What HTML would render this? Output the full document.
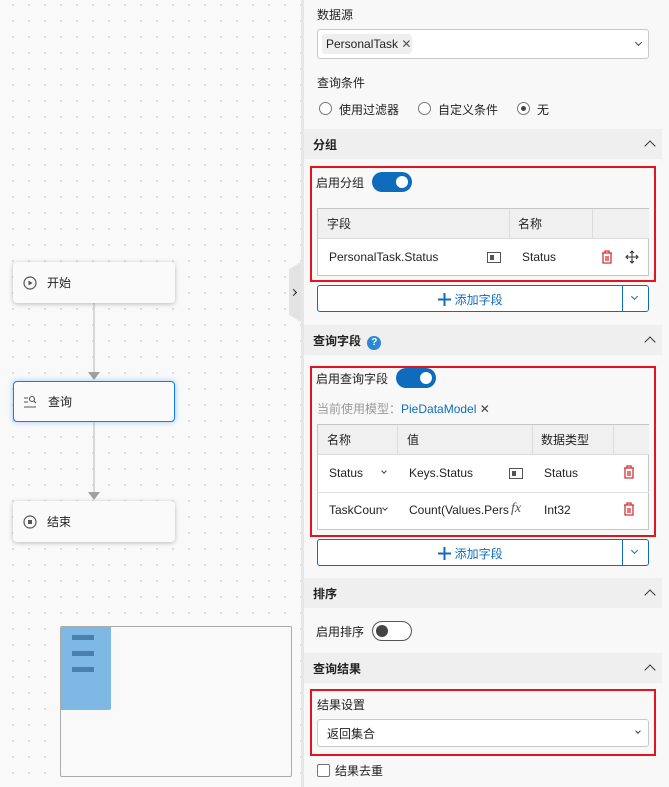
<!DOCTYPE html>
<html><head><meta charset="utf-8"><style>
*{box-sizing:border-box;margin:0;padding:0}
body{width:669px;height:787px;overflow:hidden;position:relative;background:#f9f9f9;font-family:"Liberation Sans","Noto Sans CJK SC",sans-serif;font-size:12px;color:#222}
.a{position:absolute}
#canvas{left:0;top:0;width:301px;height:787px;background-color:#f9f9f9;background-image:radial-gradient(circle,#d4d4d4 0.9px,transparent 1.1px);background-size:16px 16px;background-position:5px -3px}
.node{position:absolute;left:13px;width:162px;height:41px;background:#fafafa;border-radius:4px;box-shadow:0 1px 5px rgba(0,0,0,.25);display:flex;align-items:center;padding-left:10px;font-size:12px;color:#222}
.node .t{margin-left:10px}
#panel{left:301px;top:0;width:368px;height:787px;background:#f8f8f8;border-left:3px solid #e6e6e6}
.hdr{position:absolute;left:304px;width:358px;height:30px;background:#efefef;font-weight:bold;font-size:12px;padding:7px 0 0 9px}
.hdr .c{position:absolute;right:8px;top:13px;width:8px;height:8px;border-left:1.5px solid #333;border-top:1.5px solid #333;transform:rotate(45deg)}
.red{position:absolute;left:310px;width:346px;border:2px solid #e3141e}
.box{position:absolute;left:317px;width:332px;background:#fff;border:1px solid #c9c9c9;border-radius:3px}
.chev{position:absolute;width:5px;height:5px;border-right:1.3px solid #444;border-bottom:1.3px solid #444;transform:rotate(45deg)}
.tog{position:absolute;width:40px;height:20px;border-radius:10px;background:#0f6cbd}
.tog:after{content:"";position:absolute;right:4px;top:4px;width:12px;height:12px;border-radius:50%;background:#fff}
.tog.off{background:#fff;border:1px solid #555}
.tog.off:after{left:3px;top:3px;right:auto;background:#444}
.tbl{position:absolute;left:317px;width:332px;border:1px solid #c6c6c6;background:#fff}
.th{position:absolute;top:0;height:30px;background:#f0f0f0;border-bottom:1px solid #dcdcdc}
.btn{position:absolute;left:317px;width:332px;height:27px;border:1px solid #0f6cbd;border-radius:3px;background:#fff;color:#0f6cbd;font-size:12px}
.radio{position:absolute;width:13px;height:13px;border:1px solid #777;border-radius:50%;background:#fff}
.trash{position:absolute;width:12px;height:14px}
</style></head><body>
<div id="canvas" class="a"></div>
<div class="a" style="left:93px;top:302px;width:2px;height:72px;background:#d8d8d8"></div>
<div class="a" style="left:88px;top:372px;border-left:6px solid transparent;border-right:6px solid transparent;border-top:8px solid #a0a0a0"></div>
<div class="a" style="left:93px;top:422px;width:2px;height:72px;background:#d8d8d8"></div>
<div class="a" style="left:88px;top:492px;border-left:6px solid transparent;border-right:6px solid transparent;border-top:8px solid #a0a0a0"></div>
<div class="node" style="top:262px"><svg width="14" height="14" viewBox="0 0 14 14"><circle cx="7" cy="7" r="6" fill="none" stroke="#555" stroke-width="1.2"/><path d="M5.5 4.5L9.5 7L5.5 9.5Z" fill="#555"/></svg><span class="t">开始</span></div>
<div class="node" style="top:381px;border:1px solid #0f7bff;box-shadow:0 0 6px rgba(40,140,255,.45);padding-left:9px"><svg width="15" height="14" viewBox="0 0 15 14"><path d="M1 3H5M1 7H5M1 12H13" stroke="#555" stroke-width="1.1"/><circle cx="9" cy="4" r="2.5" fill="none" stroke="#555" stroke-width="1.1"/><path d="M11 6L13 8" stroke="#555" stroke-width="1.2"/></svg><span class="t">查询</span></div>
<div class="node" style="top:501px"><svg width="14" height="14" viewBox="0 0 14 14"><circle cx="7" cy="7" r="6" fill="none" stroke="#555" stroke-width="1.2"/><rect x="5" y="5" width="4" height="4" fill="#555"/></svg><span class="t">结束</span></div>
<div class="a" style="left:289px;top:262px;width:12px;height:60px;background:#e3e3e3;clip-path:polygon(0 12%,100% 0,100% 100%,0 88%)"></div>
<div class="chev" style="left:291px;top:290px;transform:rotate(-45deg);border-color:#222;border-width:1.8px"></div>
<div class="a" style="left:60px;top:626px;width:232px;height:151px;border:1px solid #aaa;border-radius:2px;background:#f9f9f9"></div>
<div class="a" style="left:61px;top:627px;width:50px;height:83px;background:#7eb8e4;border-radius:0 0 2px 0"></div>
<div class="a" style="left:72px;top:635px;width:22px;height:5px;background:#4a80ad"></div>
<div class="a" style="left:72px;top:651px;width:22px;height:5px;background:#4a80ad"></div>
<div class="a" style="left:72px;top:667px;width:22px;height:5px;background:#4a80ad"></div>

<div id="panel" class="a"></div>
<div class="a" style="left:317px;top:6px">数据源</div>
<div class="box" style="top:29px;height:30px"></div>
<div class="a" style="left:322px;top:34px;height:20px;width:90px;background:#efefef;border-radius:3px;padding:3px 0 0 4px">PersonalTask <span style="color:#555">✕</span></div>
<div class="chev" style="left:636px;top:40px"></div>
<div class="a" style="left:317px;top:74px">查询条件</div>
<div class="radio" style="left:319px;top:102px"></div><div class="a" style="left:339px;top:101px">使用过滤器</div>
<div class="radio" style="left:418px;top:102px"></div><div class="a" style="left:438px;top:101px">自定义条件</div>
<div class="radio" style="left:517px;top:102px"></div><div class="a" style="left:521px;top:106px;width:5px;height:5px;border-radius:50%;background:#444"></div><div class="a" style="left:537px;top:101px">无</div>

<div class="hdr" style="top:129px">分组<span class="c"></span></div>
<div class="red" style="top:166px;height:116px"></div>
<div class="a" style="left:316px;top:174px">启用分组</div>
<div class="tog" style="left:372px;top:172px"></div>
<div class="tbl" style="top:208px;height:68px">
 <div class="th" style="left:0;width:192px;border-right:1px solid #dcdcdc;padding:6px 0 0 9px">字段</div>
 <div class="th" style="left:192px;width:83px;border-right:1px solid #dcdcdc;padding:6px 0 0 8px">名称</div>
 <div class="th" style="left:275px;width:56px"></div>
 <div class="a" style="left:11px;top:41px">PersonalTask.Status</div>
 <div class="a" style="left:169px;top:43px;width:14px;height:11px;border:1px solid #555"><div style="margin:2px;width:4px;height:5px;background:#555"></div></div>
 <div class="a" style="left:204px;top:41px">Status</div>
 <svg class="trash" style="left:283px;top:41px" viewBox="0 0 12 14"><path d="M1 3H11M4 3V1H8V3M2 3V13H10V3M5 6V11M7 6V11" fill="none" stroke="#d13438" stroke-width="1.3"/></svg>
 <svg class="a" style="left:307px;top:41px" width="14" height="14" viewBox="0 0 14 14"><path d="M7 1V13M1 7H13M5 3L7 1L9 3M5 11L7 13L9 11M3 5L1 7L3 9M11 5L13 7L11 9" fill="none" stroke="#333" stroke-width="1.1"/></svg>
</div>
<div class="btn" style="top:285px"><div class="a" style="left:0;width:305px;top:5px;text-align:center"><svg width="13" height="13" viewBox="0 0 13 13" style="vertical-align:-2px"><path d="M6.5 0V13M0 6.5H13" stroke="#0f6cbd" stroke-width="2"/></svg> 添加字段</div><div class="a" style="left:304px;top:0;width:1px;height:25px;background:#0f6cbd"></div><div class="chev" style="left:314px;top:8px;border-color:#0f6cbd"></div></div>

<div class="hdr" style="top:325px">查询字段 <span style="display:inline-block;width:14px;height:14px;border-radius:50%;background:#2b88d8;color:#fff;font-size:10px;text-align:center;line-height:14px;margin-left:3px">?</span><span class="c"></span></div>
<div class="red" style="top:366px;height:171px"></div>
<div class="a" style="left:316px;top:370px">启用查询字段</div>
<div class="tog" style="left:396px;top:368px"></div>
<div class="a" style="left:317px;top:400px;color:#999">当前使用模型：<span style="color:#0f6cbd">PieDataModel</span> <span style="color:#444">✕</span></div>
<div class="tbl" style="top:424px;height:106px">
 <div class="th" style="left:0;width:80px;border-right:1px solid #dcdcdc;padding:6px 0 0 9px">名称</div>
 <div class="th" style="left:80px;width:135px;border-right:1px solid #dcdcdc;padding:6px 0 0 9px">值</div>
 <div class="th" style="left:215px;width:81px;border-right:1px solid #dcdcdc;padding:6px 0 0 8px">数据类型</div>
 <div class="th" style="left:296px;width:35px"></div>
 <div class="a" style="left:0;top:67px;width:331px;height:1px;background:#e3e3e3"></div>
 <div class="a" style="left:11px;top:41px">Status</div><div class="chev" style="left:64px;top:44px;width:4px;height:4px"></div>
 <div class="a" style="left:91px;top:41px">Keys.Status</div>
 <div class="a" style="left:191px;top:43px;width:14px;height:11px;border:1px solid #555"><div style="margin:2px;width:4px;height:5px;background:#555"></div></div>
 <div class="a" style="left:226px;top:41px">Status</div>
 <svg class="trash" style="left:305px;top:40px" viewBox="0 0 12 14"><path d="M1 3H11M4 3V1H8V3M2 3V13H10V3M5 6V11M7 6V11" fill="none" stroke="#d13438" stroke-width="1.3"/></svg>
 <div class="a" style="left:11px;top:78px">TaskCoun</div><div class="chev" style="left:65px;top:81px;width:4px;height:4px"></div>
 <div class="a" style="left:91px;top:78px;width:100px;overflow:hidden;white-space:nowrap">Count(Values.Pers</div>
 <div class="a" style="left:193px;top:76px;font-family:'Liberation Serif',serif;font-style:italic;font-size:14px;color:#555">fx</div>
 <div class="a" style="left:226px;top:78px">Int32</div>
 <svg class="trash" style="left:305px;top:77px" viewBox="0 0 12 14"><path d="M1 3H11M4 3V1H8V3M2 3V13H10V3M5 6V11M7 6V11" fill="none" stroke="#d13438" stroke-width="1.3"/></svg>
</div>
<div class="btn" style="top:539px"><div class="a" style="left:0;width:305px;top:5px;text-align:center"><svg width="13" height="13" viewBox="0 0 13 13" style="vertical-align:-2px"><path d="M6.5 0V13M0 6.5H13" stroke="#0f6cbd" stroke-width="2"/></svg> 添加字段</div><div class="a" style="left:304px;top:0;width:1px;height:25px;background:#0f6cbd"></div><div class="chev" style="left:314px;top:8px;border-color:#0f6cbd"></div></div>

<div class="hdr" style="top:578px">排序<span class="c"></span></div>
<div class="a" style="left:316px;top:623px">启用排序</div>
<div class="tog off" style="left:372px;top:621px"></div>

<div class="hdr" style="top:653px">查询结果<span class="c"></span></div>
<div class="red" style="top:689px;height:67px"></div>
<div class="a" style="left:317px;top:696px">结果设置</div>
<div class="box" style="top:719px;height:28px"></div>
<div class="a" style="left:327px;top:725px">返回集合</div>
<div class="chev" style="left:636px;top:729px;width:4px;height:4px"></div>
<div class="a" style="left:317px;top:764px;width:13px;height:13px;border:1px solid #777;border-radius:2px;background:#fff"></div>
<div class="a" style="left:335px;top:762px">结果去重</div>
</body></html>
